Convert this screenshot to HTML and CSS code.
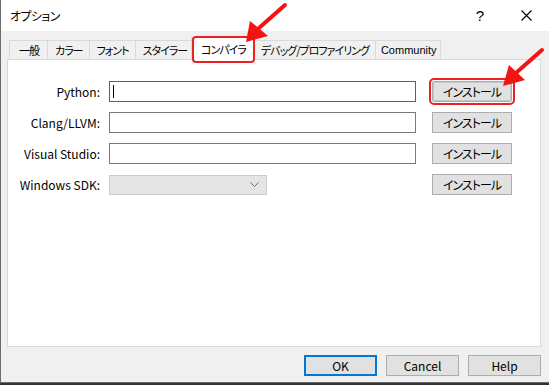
FILE: index.html
```html
<!DOCTYPE html>
<html lang="ja">
<head>
  <meta charset="UTF-8">
  <title>オプション</title>
  <link rel="stylesheet" href="styles.css">
</head>
<body>

  <div class="window">
    <div class="titlebar">
      <div class="title">オプション</div>
      <div class="caption-btn help-btn">?</div>
      <div class="caption-btn close-btn">
        <svg width="11" height="11" viewBox="0 0 11 11">
          <path d="M0.5 0.5 L10.5 10.5 M10.5 0.5 L0.5 10.5" stroke="#000" stroke-width="1.1" fill="none"/>
        </svg>
      </div>
    </div>

    <div class="content">
      <div class="tabs">
        <div class="tab">一般</div>
        <div class="tab">カラー</div>
        <div class="tab">フォント</div>
        <div class="tab">スタイラー</div>
        <div class="tab active">コンパイラ</div>
        <div class="tab">デバッグ/プロファイリング</div>
        <div class="tab latin">Community</div>
      </div>

      <div class="panel">
        <div class="form">
          <div class="label">Python:</div>
          <div class="field focused"><span class="caret"></span></div>
          <div class="btn install marked">インストール</div>

          <div class="label">Clang/LLVM:</div>
          <div class="field"></div>
          <div class="btn install">インストール</div>

          <div class="label">Visual Studio:</div>
          <div class="field"></div>
          <div class="btn install">インストール</div>

          <div class="label">Windows SDK:</div>
          <div class="select">
            <svg width="9" height="5" viewBox="0 0 9 5">
              <path d="M0.5 0.5 L4.5 4.5 L8.5 0.5" stroke="#6d6d6d" stroke-width="1" fill="none"/>
            </svg>
          </div>
          <div class="btn install">インストール</div>
        </div>
      </div>

      <div class="footer">
        <div class="btn default">OK</div>
        <div class="btn">Cancel</div>
        <div class="btn">Help</div>
      </div>
    </div>

    <!-- 赤い矢印 -->
    <svg class="arrows" width="549" height="385" viewBox="0 0 549 385">
      <line x1="285" y1="5" x2="259" y2="28" stroke="#f51212" stroke-width="4" stroke-linecap="round"/>
      <polygon points="246,42 250,21 268,36" fill="#f51212"/>
      <line x1="542" y1="50" x2="517" y2="72" stroke="#f51212" stroke-width="4" stroke-linecap="round"/>
      <polygon points="503,86 509,65 525,80" fill="#f51212"/>
    </svg>
  </div>

</body>
</html>
```

FILE: styles.css
```css
body {
  margin: 0;
  background-color: #30343a;
  font-family: "Noto Sans CJK JP", "Liberation Sans", sans-serif;
  font-size: 12px;
  font-feature-settings: "palt";
  color: #000;
}

.window {
  position: relative;
  width: 549px;
  height: 383px;
  box-sizing: border-box;
  border-left: 1px solid #6b6b6b;
  border-bottom: 1px solid #6b6b6b;
  background-color: #f0f0f0;
  display: flex;
  flex-direction: column;
}

.titlebar {
  height: 31px;
  background-color: #fff;
  display: flex;
  align-items: center;
}

.title {
  flex: 1;
  padding-left: 9px;
  font-size: 12px;
  letter-spacing: -0.6px;
  line-height: 31px;
}

.caption-btn {
  width: 46px;
  height: 31px;
  display: flex;
  align-items: center;
  justify-content: center;
}

.help-btn {
  font-family: "Liberation Sans", sans-serif;
  font-size: 15px;
}

.content {
  flex: 1;
  padding: 7px 8px 0 6px;
}

.tabs {
  display: flex;
  align-items: flex-end;
  height: 22px;
  padding-left: 2px;
}

.tab {
  height: 19px;
  line-height: 19px;
  padding: 0 6px 0 7px;
  border: 1px solid #d9d9d9;
  border-bottom: none;
  margin-right: -1px;
  background-color: #f0f0f0;
  font-size: 11px;
  letter-spacing: -1px;
  white-space: nowrap;
}

.tab:first-child {
  padding: 0 8px 0 9px;
}

.tab.latin {
  font-family: "Liberation Sans", sans-serif;
  letter-spacing: 0;
  padding: 0 3px 0 5px;
}

.tab.active {
  position: relative;
  z-index: 3;
  height: 22px;
  line-height: 22px;
  margin: 0 -1px 0 -2px;
  padding: 0 7px 0 9px;
  background-color: #fff;
}

.tab.active::after {
  content: "";
  position: absolute;
  top: -2px;
  left: 0;
  right: -2px;
  bottom: -3px;
  border: 2px solid #ee2024;
  border-radius: 4px;
}

.panel {
  position: relative;
  z-index: 1;
  margin-top: -1px;
  height: 286px;
  border: 1px solid #d9d9d9;
  background-color: #fff;
}

.form {
  display: grid;
  grid-template-columns: 101px 307px 80px;
  row-gap: 10px;
  align-items: center;
  padding-top: 21px;
}

.label {
  text-align: right;
  padding-right: 9px;
  line-height: 21px;
}

.field {
  height: 21px;
  box-sizing: border-box;
  border: 1px solid #7a7a7a;
  background-color: #fff;
  position: relative;
}

.field.focused {
  border-color: #0078d7;
}

.caret {
  position: absolute;
  left: 3px;
  top: 3px;
  width: 1px;
  height: 13px;
  background-color: #000;
}

.select {
  width: 158px;
  height: 20px;
  box-sizing: border-box;
  border: 1px solid #cccccc;
  background-color: #e5e5e5;
  display: flex;
  align-items: center;
  justify-content: flex-end;
  padding-right: 7px;
}

.btn {
  width: 73px;
  height: 21px;
  box-sizing: border-box;
  border: 1px solid #adadad;
  background-color: #e1e1e1;
  text-align: center;
  line-height: 19px;
}

.install {
  width: 80px;
  margin-left: 16px;
  letter-spacing: -1px;
}

.install.marked {
  outline: 2px solid #ee2024;
  outline-offset: 1px;
  border-radius: 2px;
  box-shadow: inset 0 0 0 1px #c8c8c8;
}

.default {
  border: 2px solid #0078d7;
  line-height: 17px;
}

.footer {
  display: flex;
  justify-content: flex-end;
  gap: 9px;
  padding-top: 8px;
}

.arrows {
  position: absolute;
  left: -1px;
  top: 0;
  z-index: 10;
  pointer-events: none;
}
```
